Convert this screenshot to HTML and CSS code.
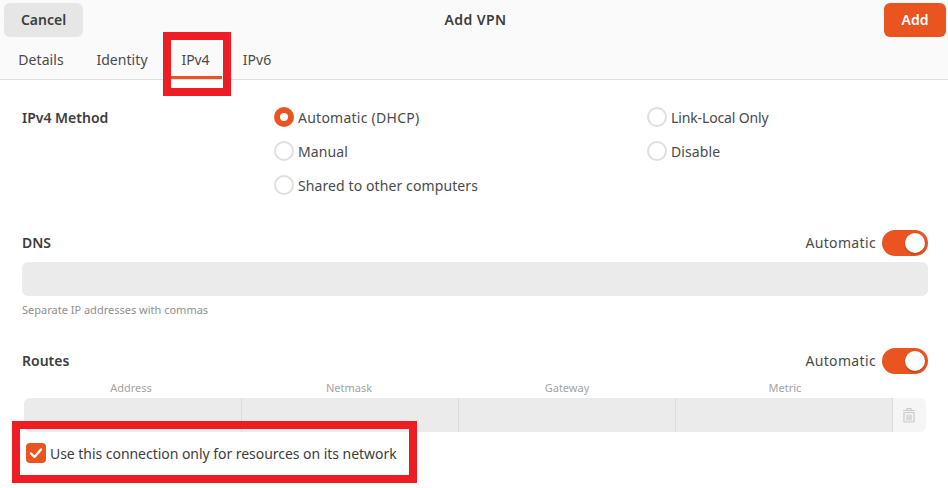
FILE: index.html
```html
<!DOCTYPE html>
<html lang="en">
<head>
<meta charset="utf-8">
<title>Add VPN</title>
<link rel="stylesheet" href="styles.css">
</head>
<body>
<div class="dialog">
  <header class="head">
    <div class="titlebar">
      <button class="btn btn-cancel">Cancel</button>
      <div class="title">Add VPN</div>
      <button class="btn btn-add">Add</button>
    </div>
    <nav class="tabs">
      <span class="tab tab-details">Details</span>
      <span class="tab tab-identity">Identity</span>
      <span class="tab tab-active">IPv4</span>
      <span class="tab tab-v6">IPv6</span>
    </nav>
  </header>
  <main class="content">
    <section class="method">
      <div class="section-label method-label">IPv4 Method</div>
      <div class="radios">
        <label class="radio-row wide"><span class="radio radio-on"></span>Automatic (DHCP)</label>
        <label class="radio-row narrow"><span class="radio"></span>Link-Local Only</label>
        <label class="radio-row"><span class="radio"></span>Manual</label>
        <label class="radio-row"><span class="radio"></span>Disable</label>
        <label class="radio-row"><span class="radio"></span>Shared to other computers</label>
      </div>
    </section>
    <section class="dns">
      <div class="section-head">
        <div class="section-label">DNS</div>
        <div class="auto"><span class="auto-text">Automatic</span><span class="switch"><span class="knob"></span></span></div>
      </div>
      <div class="entry"></div>
      <div class="hint">Separate IP addresses with commas</div>
    </section>
    <section class="routes">
      <div class="section-head">
        <div class="section-label">Routes</div>
        <div class="auto"><span class="auto-text">Automatic</span><span class="switch"><span class="knob"></span></span></div>
      </div>
      <div class="cols">
        <span>Address</span><span>Netmask</span><span>Gateway</span><span>Metric</span>
      </div>
      <div class="route-row">
        <div class="cell"></div><div class="cell"></div><div class="cell"></div><div class="cell"></div>
        <div class="trash">
          <svg width="14" height="16" viewBox="0 0 14 16" fill="none" stroke="#c9c9c9" stroke-width="1.2">
            <path d="M1 3.500h12M5 3.500V1.500h4v2M2 5.500h10v9.500H2zM5 7.500v6M7 7.500v6M9 7.500v6"/>
          </svg>
        </div>
      </div>
    </section>
    <label class="check-row">
      <span class="check">
        <svg width="20" height="20" viewBox="0 0 20 20" fill="none" stroke="#fff" stroke-width="2.4" stroke-linecap="round" stroke-linejoin="round"><path d="M5 10.500l3.500 3.500 6.500-7.500"/></svg>
      </span>
      Use this connection only for resources on its network
    </label>
  </main>
  <div class="mark mark-tab"></div>
  <div class="mark mark-check"></div>
</div>
</body>
</html>
```
FILE: styles.css
```css
* { box-sizing: border-box; }
html, body { margin: 0; padding: 0; }
body {
  width: 948px;
  height: 488px;
  overflow: hidden;
  background: #fff;
  font-family: "Noto Sans", "Open Sans", sans-serif;
  font-size: 14px;
  color: #3d3d3d;
}
.dialog { position: relative; width: 948px; height: 488px; }

.head { height: 80px; padding-top: 3px; background: #fafafa; border-bottom: 1px solid #dedede; }
.titlebar {
  display: flex;
  align-items: center;
  justify-content: space-between;
  height: 34px;
  padding: 0 2px 0 4px;
}
.btn {
  height: 34px;
  border: 0;
  border-radius: 6px;
  font-family: inherit;
  font-size: 14px;
  font-weight: 600;
  padding: 0 0 2px;
}
.btn-cancel { width: 79px; background: #e6e6e6; color: #3d3d3d; }
.btn-add { width: 62px; background: #e95420; color: #fff; }
.title { font-weight: 600; font-size: 14px; letter-spacing: .4px; color: #3d3d3d; margin: 0 16px 2px 0; }

.tabs {
  display: flex;
  height: 42px;
  margin-top: 2px;
  padding-left: 8px;
}
.tab {
  display: flex;
  align-items: center;
  justify-content: center;
  height: 40px;
  padding-top: 1px;
  font-size: 14px;
  letter-spacing: .05px;
  color: #4a4a4a;
}
.tab-details { width: 66px; }
.tab-identity { width: 70px; margin-left: 13px; }
.tab-active { width: 51px; margin-left: 14px; border-bottom: 3px solid #e95420; padding: 4px 2px 0 0; letter-spacing: -.1px; }
.tab-v6 { width: 50px; margin-left: 10px; }

.content { padding: 0 20px 0 22px; }
.section-label { font-weight: 600; font-size: 14px; color: #3d3d3d; }

.method { display: flex; padding-top: 21px; height: 138px; }
.method-label { width: 252px; line-height: 34px; height: 34px; }
.radios {
  display: grid;
  grid-template-columns: 373px auto;
  grid-auto-rows: 34px;
  margin-top: -1px;
}
.radio-row { display: flex; align-items: center; gap: 4px; font-size: 14px; letter-spacing: .1px; color: #4a4a4a; height: 34px; }
.radio-row.wide { letter-spacing: .25px; }
.radio-row.narrow { letter-spacing: -.13px; }
.radio {
  width: 20px;
  height: 20px;
  border-radius: 50%;
  border: 2px solid #dfdfdf;
  background: #fff;
  flex: none;
}
.radio-on { border: 6px solid #e95420; }

.dns { padding-top: 12px; }
.section-head { display: flex; align-items: center; justify-content: space-between; height: 26px; }
.section-head .section-label { padding-bottom: 2px; }
.auto { display: flex; align-items: center; gap: 6px; font-size: 14px; letter-spacing: .35px; color: #4a4a4a; }
.auto-text { padding-bottom: 2px; }
.switch {
  display: flex;
  justify-content: flex-end;
  align-items: center;
  width: 46px;
  height: 26px;
  padding-right: 3px;
  border-radius: 13px;
  background: #e95420;
}
.knob { width: 20px; height: 20px; border-radius: 50%; background: #fff; box-shadow: 0 1px 2px rgba(0, 0, 0, .25); }
.entry { height: 34px; margin-top: 6px; background: #ebebeb; border-radius: 6px; }
.hint { margin-top: 6px; font-size: 11px; line-height: 15px; color: #8f8f8f; }

.routes { padding-top: 31px; }
.cols {
  display: grid;
  grid-template-columns: repeat(4, 218px);
  margin-top: 5px;
  height: 19px;
  line-height: 18px;
  font-size: 11px;
  color: #a3a3a3;
  text-align: center;
}
.route-row {
  display: flex;
  height: 34px;
  width: 902px;
  margin-left: 2px;
  border-radius: 6px;
  overflow: hidden;
}
.cell { width: 217px; background: #ebebeb; border-right: 1px solid #dcdcdc; }
.cell:first-child { width: 218px; }
.trash { flex: 1; display: flex; align-items: center; justify-content: center; padding-right: 2px; background: #f5f5f5; }

.check-row { display: flex; align-items: center; gap: 4px; height: 20px; margin: 11px 0 0 4px; font-size: 14px; letter-spacing: -.04px; color: #3d3d3d; }
.check { width: 20px; height: 20px; flex: none; border-radius: 4px; background: #e95420; }
.check svg { display: block; }

.mark { position: absolute; border: 8px solid #ee1c25; pointer-events: none; }
.mark-tab { left: 163px; top: 32px; width: 68px; height: 64px; }
.mark-check { left: 12px; top: 421px; width: 405px; height: 62px; }
```
